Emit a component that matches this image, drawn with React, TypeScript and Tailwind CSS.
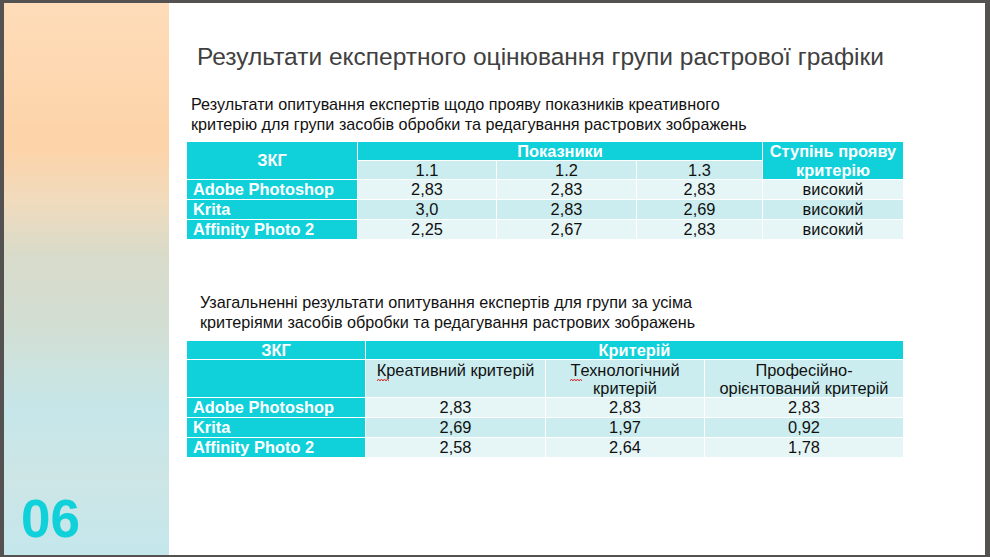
import React from 'react';

const cyan = 'bg-[#10d0d9]';
const light = 'bg-[#cbedef]';
const pale = 'bg-[#e6f6f7]';

type Row = { name: string; values: string[]; level?: string };

const firstRows: Row[] = [
  { name: 'Adobe Photoshop', values: ['2,83', '2,83', '2,83'], level: 'високий' },
  { name: 'Krita', values: ['3,0', '2,83', '2,69'], level: 'високий' },
  { name: 'Affinity Photo 2', values: ['2,25', '2,67', '2,83'], level: 'високий' },
];

const secondRows: Row[] = [
  { name: 'Adobe Photoshop', values: ['2,83', '2,83', '2,83'] },
  { name: 'Krita', values: ['2,69', '1,97', '0,92'] },
  { name: 'Affinity Photo 2', values: ['2,58', '2,64', '1,78'] },
];

function HeadCell({ children, className }: { children: React.ReactNode; className?: string }) {
  return (
    <div className={`${cyan} flex items-center justify-center font-bold text-white ${className ?? ''}`}>
      {children}
    </div>
  );
}

function NameCell({ name }: { name: string }) {
  return <div className={`${cyan} flex items-center pl-[6px] font-bold text-white`}>{name}</div>;
}

function ValueCell({ children, tone }: { children: React.ReactNode; tone: string }) {
  return <div className={`${tone} flex items-center justify-center text-[#111]`}>{children}</div>;
}

// spell-check mark under the first letter
function Squiggle({ children }: { children: React.ReactNode }) {
  return (
    <span className="relative">
      {children}
      <svg className="absolute -bottom-[3px] left-0" width="12" height="4" viewBox="0 0 12 4">
        <path d="M0 3 L1.5 1 L3 3 L4.5 1 L6 3 L7.5 1 L9 3 L10.5 1 L12 3" fill="none" stroke="#e02a2a" strokeWidth="1" />
      </svg>
    </span>
  );
}

export default function App() {
  return (
    <div className="flex h-[557px] w-[990px] bg-[#545250] pb-[2px] pl-[4px] pr-[5px] pt-[3px] font-['Liberation_Sans',Arial,sans-serif]">
      <aside className="flex w-[165px] flex-col justify-end bg-[linear-gradient(180deg,#fedcb9_0%,#fdd3a8_26%,#f0dbbd_36%,#d8dbca_46%,#d3ded3_58%,#cce3de_66%,#c6e6e9_74%,#cde5e5_86%,#c4e7ec_100%)] pb-[10px] pl-[17px]">
        <span className="text-[53px] font-bold leading-none text-[#10d0d9]">06</span>
      </aside>

      <main className="flex flex-1 flex-col bg-white pl-[18px]">
        <h1 className="mt-[39px] pl-[10px] text-[24.5px] leading-[30px] text-[#404040]">
          Результати експертного оцінювання групи растрової графіки
        </h1>

        <p className="mt-[22px] pl-[4px] text-[16.2px] leading-[20px] text-[#111]">
          Результати опитування експертів щодо прояву показників креативного
          <br />
          критерію для групи засобів обробки та редагування растрових зображень
        </p>

        <div className="mt-[8px] grid w-[716px] grid-cols-[170px_138px_139px_125px_140px] grid-rows-[18px_18px_19px_19px_19px] gap-[1px] bg-white text-[16.4px]">
          <HeadCell className="row-span-2">ЗКГ</HeadCell>
          <HeadCell className="col-span-3">Показники</HeadCell>
          <HeadCell className="row-span-2 text-center leading-[19px]">
            Ступінь прояву
            <br />
            критерію
          </HeadCell>
          <ValueCell tone={light}>1.1</ValueCell>
          <ValueCell tone={light}>1.2</ValueCell>
          <ValueCell tone={light}>1.3</ValueCell>
          {firstRows.map((row, i) => (
            <React.Fragment key={row.name}>
              <NameCell name={row.name} />
              {row.values.map((v, j) => (
                <ValueCell key={j} tone={i % 2 ? light : pale}>
                  {v}
                </ValueCell>
              ))}
              <ValueCell tone={i % 2 ? light : pale}>{row.level}</ValueCell>
            </React.Fragment>
          ))}
        </div>

        <p className="mt-[53px] pl-[13px] text-[16.2px] leading-[20px] text-[#111]">
          Узагальненні результати опитування експертів для групи за усіма
          <br />
          критеріями засобів обробки та редагування растрових зображень
        </p>

        <div className="mt-[9px] grid w-[716px] grid-cols-[178px_179px_158px_198px] grid-rows-[18px_37px_19px_19px_19px] gap-[1px] bg-white text-[16.4px]">
          <HeadCell>ЗКГ</HeadCell>
          <HeadCell className="col-span-3">Критерій</HeadCell>
          <div className={cyan} />
          <div className={`${light} pt-[1px] text-center leading-[18px] text-[#111]`}>
            <Squiggle>К</Squiggle>реативний критерій
          </div>
          <div className={`${light} pt-[1px] text-center leading-[18px] text-[#111]`}>
            <Squiggle>Т</Squiggle>ехнологічний
            <br />
            критерій
          </div>
          <div className={`${light} pt-[1px] text-center leading-[18px] text-[#111]`}>
            Професійно-
            <br />
            орієнтований критерій
          </div>
          {secondRows.map((row, i) => (
            <React.Fragment key={row.name}>
              <NameCell name={row.name} />
              {row.values.map((v, j) => (
                <ValueCell key={j} tone={i % 2 ? light : pale}>
                  {v}
                </ValueCell>
              ))}
            </React.Fragment>
          ))}
        </div>
      </main>
    </div>
  );
}
